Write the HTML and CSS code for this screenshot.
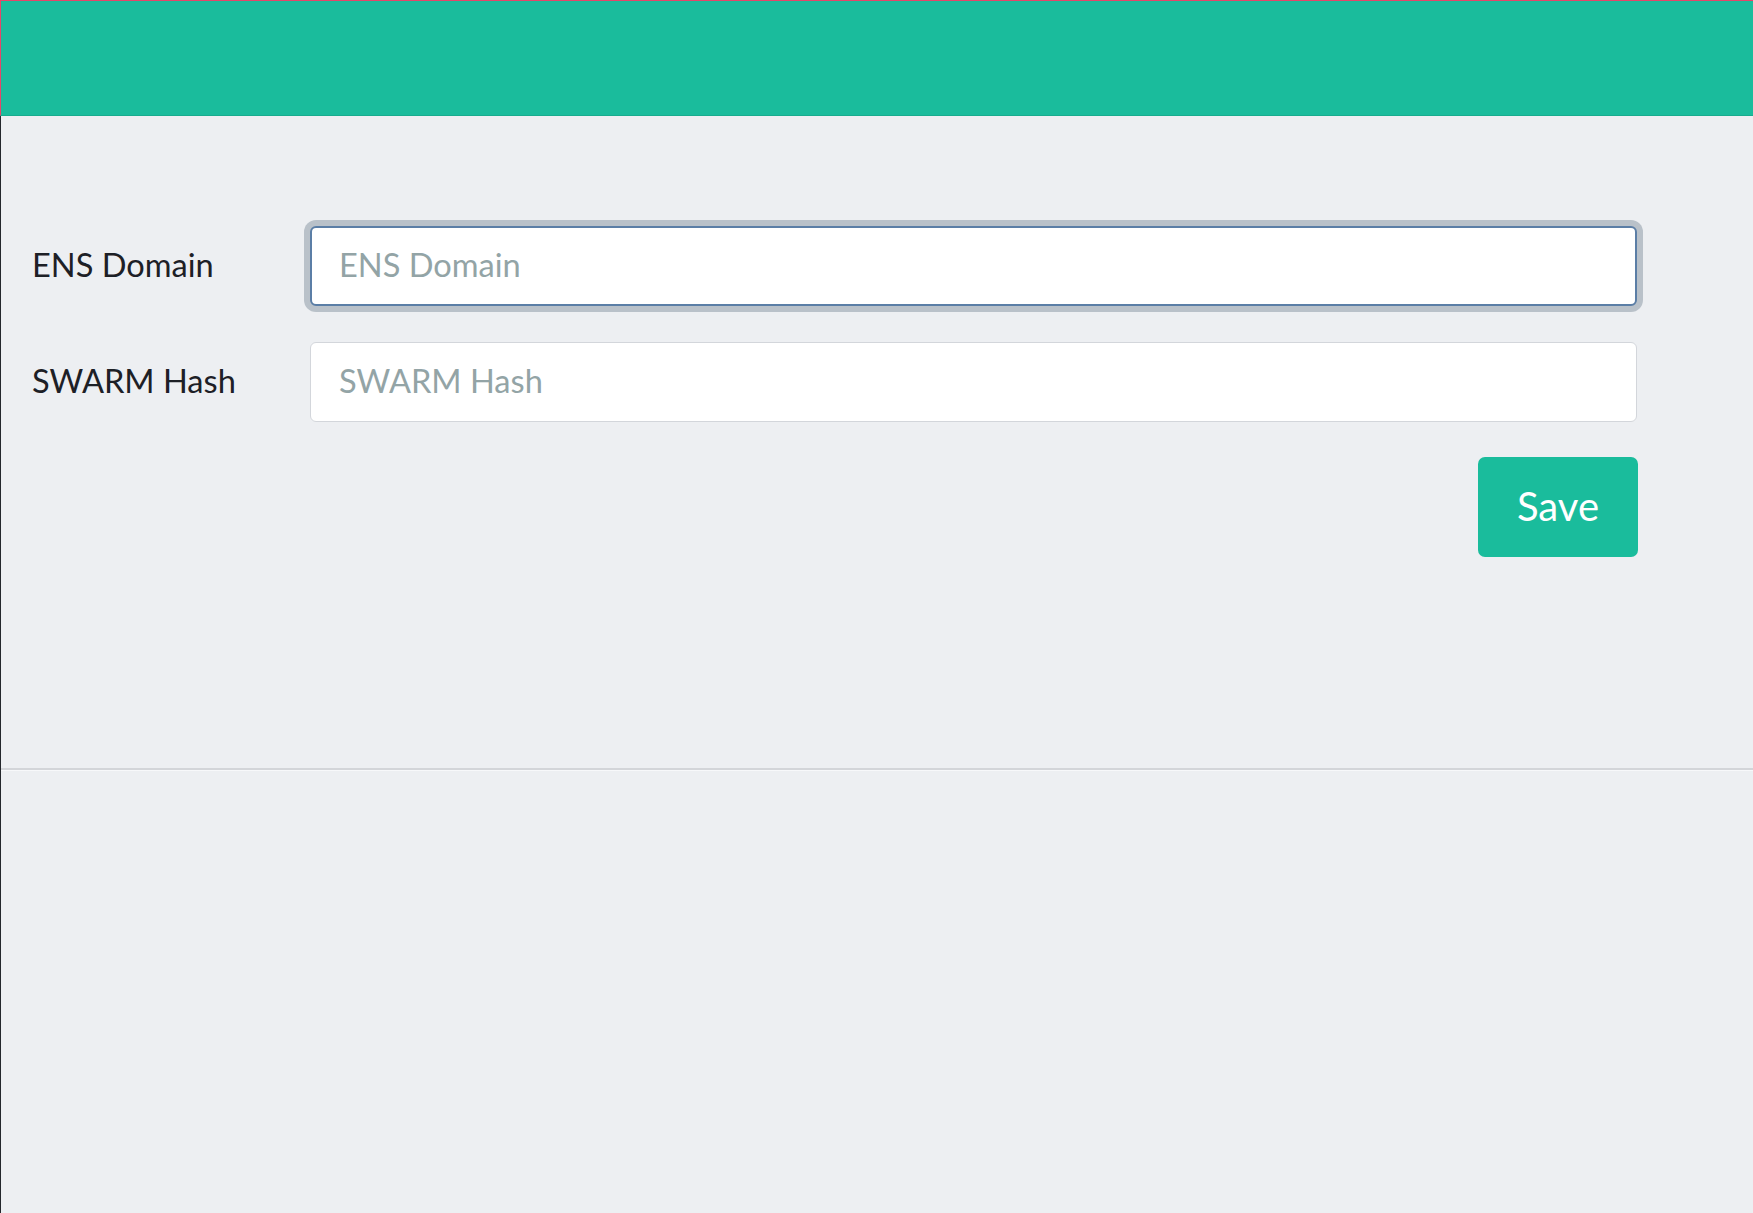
FILE: index.html
```html
<!DOCTYPE html>
<html lang="en">
<head>
<meta charset="utf-8">
<title>ENS</title>
<link rel="stylesheet" href="styles.css">
</head>
<body>
<div class="page">
  <header class="topbar"></header>
  <main class="content">
    <form class="form">
      <div class="row">
        <label class="label" for="ens">ENS Domain</label>
        <input class="field is-focused" id="ens" type="text" placeholder="ENS Domain" autofocus>
      </div>
      <div class="row">
        <label class="label" for="swarm">SWARM Hash</label>
        <input class="field" id="swarm" type="text" placeholder="SWARM Hash">
      </div>
      <div class="actions">
        <button class="btn-save" type="button">Save</button>
      </div>
    </form>
  </main>
  <div class="footer-area"></div>
</div>
</body>
</html>
```

FILE: styles.css
```css
* { box-sizing: border-box; }
html, body { margin: 0; padding: 0; height: 100%; }
body {
  background: #edeff2;
  font-family: Lato, "Open Sans", "Liberation Sans", sans-serif;
  color: #1f2227;
}
.page {
  min-height: 100vh;
  border-left: 1px solid #24272c;
  display: flex;
  flex-direction: column;
}
.topbar {
  height: 116px;
  margin-left: -1px;
  background: #1abc9c;
  border-top: 1px solid #e5466a;
  border-left: 1px solid #e5466a;
  border-bottom: 1px solid #17ac8e;
}
.content {
  height: 654px;
  padding: 110px 116px 0 31px;
  border-bottom: 2px solid #d3d5d9;
  box-shadow: 0 1px 0 #f7f8fa;
}
.form {
  display: flex;
  flex-direction: column;
  gap: 36px;
}
.row {
  display: grid;
  grid-template-columns: 278px 1fr;
  align-items: center;
}
.label {
  font-size: 32.6px;
  line-height: 1;
  padding-bottom: 1px;
  color: #1d2026;
}
.field {
  height: 80px;
  width: 100%;
  border: 1px solid #d3d6db;
  border-radius: 6px;
  background: #fff;
  padding: 0 0 4px 28px;
  font-family: inherit;
  font-size: 32.6px;
  color: #34495e;
  outline: none;
}
.field::placeholder { color: #93a4a6; opacity: 1; }
.field.is-focused {
  border: 2px solid #5b7ea6;
  padding-left: 27px;
  box-shadow: 0 0 0 6px #b9c1c9;
}
.actions {
  display: flex;
  justify-content: flex-end;
  margin-top: -1px;
}
.btn-save {
  width: 160px;
  height: 100px;
  border: none;
  border-radius: 7px;
  background: #1abc9c;
  color: #fff;
  font-family: inherit;
  font-size: 40px;
  padding: 0 0 2px;
  margin-right: -1px;
}
.footer-area { flex: 1; }
```
